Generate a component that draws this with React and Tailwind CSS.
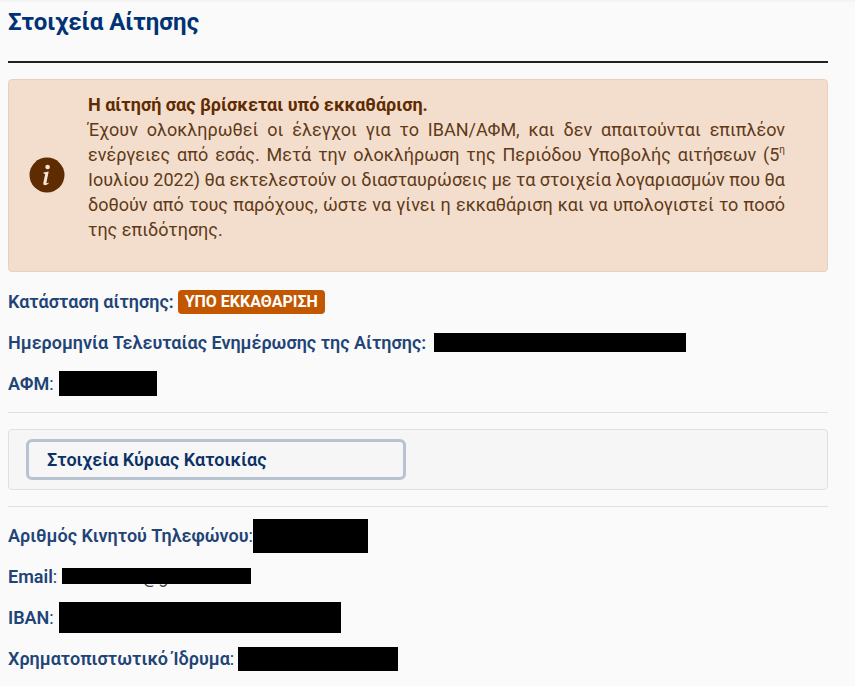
import React from "react";

const Field = ({ label, colon, children }) => (
  <div className="flex h-[25px] items-center whitespace-nowrap">
    <dt>
      <span className="font-semibold">{label}</span>
      {colon}
    </dt>
    <dd className="flex items-center">{children}</dd>
  </div>
);

const InfoIcon = () => (
  <svg viewBox="0 0 36 36" className="h-9 w-9 shrink-0" aria-hidden="true">
    <circle cx="18" cy="18" r="17.5" fill="#5f2b01" />
    <circle cx="18.6" cy="10" r="2.3" fill="#f7e6d8" />
    <path
      d="M14.6 15.6 L19.7 14.6 L17.5 25.2 Q17.3 26.6 18.3 26.2 L19.4 25.4 L19.8 26.2 Q17.8 28.2 15.9 28.2 Q13.9 28.2 14.4 25.6 L16.2 17 L14.4 16.5 Z"
      fill="#f7e6d8"
    />
  </svg>
);

const App = () => {
  return (
    <main className="min-h-screen border-t-2 border-[#f4f4f4] bg-[#fafafa] pl-2 pr-[27px] pt-[5px] pb-3 font-['Roboto',sans-serif] text-lg leading-[25px] text-[#1f4477]">
      <h1 className="border-b-2 border-[#212121] pb-[23px] text-2xl leading-[31px] font-bold text-[#003375]">
        Στοιχεία Αίτησης
      </h1>

      {/* Status message */}
      <section className="mt-4 flex items-center rounded-sm border border-[#e8d0bd] bg-[#f3decd] pt-3 pb-[13px] pl-5 pr-[42px] text-[#5f3a18]">
        <InfoIcon />
        <div className="ml-[23px] mb-4 flex-1">
          <p className="font-bold text-[#5f2b01]">
            Η αίτησή σας βρίσκεται υπό εκκαθάριση.
          </p>
          <p className="text-justify">
            Έχουν ολοκληρωθεί οι έλεγχοι για το ΙΒΑΝ/ΑΦΜ, και δεν απαιτούνται
            επιπλέον ενέργειες από εσάς. Μετά την ολοκλήρωση της Περιόδου
            Υποβολής αιτήσεων (5
            <sup className="-top-2 text-[10px] leading-none">η</sup> Ιουλίου
            2022) θα εκτελεστούν οι διασταυρώσεις με τα στοιχεία λογαριασμών
            που θα δοθούν από τους παρόχους, ώστε να γίνει η εκκαθάριση και να
            υπολογιστεί το ποσό της επιδότησης.
          </p>
        </div>
      </section>

      {/* Application state */}
      <dl className="mt-[17px] space-y-4">
        <Field label="Κατάσταση αίτησης:">
          <span className="ml-1 rounded bg-[#c25700] px-[7px] text-base leading-6 font-bold text-white">
            ΥΠΟ ΕΚΚΑΘΑΡΙΣΗ
          </span>
        </Field>
        <Field label="Ημερομηνία Τελευταίας Ενημέρωσης της Αίτησης:">
          <span className="ml-2 h-[19px] w-[252px] bg-black" />
        </Field>
        <Field label="ΑΦΜ" colon=":">
          <span className="ml-[5px] h-[25px] w-[98px] bg-black" />
        </Field>
      </dl>

      {/* Main residence */}
      <div className="my-4 border-y border-[#dfe0e2] py-4">
        <div className="rounded-sm border border-[#dfe0e2] bg-[#f6f6f6] px-[17px] py-[9px]">
          <button
            type="button"
            className="block h-[41px] w-[380px] max-w-full rounded-md border-3 border-[#b8c3d1] px-[18px] text-left font-semibold text-[#0b3166]"
          >
            Στοιχεία Κύριας Κατοικίας
          </button>
        </div>
      </div>

      {/* Contact and bank details */}
      <dl className="space-y-4">
        <Field label="Αριθμός Κινητού Τηλεφώνου" colon=":">
          <span className="h-[34px] w-[115px] bg-black" />
        </Field>
        <Field label="Email" colon=":">
          <span className="relative ml-[5px] w-[189px] pl-20 text-[#444444]">
            @g
            <span className="absolute inset-x-0 top-1 h-4 bg-black" />
          </span>
        </Field>
        <Field label="IBAN" colon=":">
          <span className="ml-[5px] h-[31px] w-[282px] bg-black" />
        </Field>
        <Field label="Χρηματοπιστωτικό Ίδρυμα" colon=":">
          <span className="ml-1 h-6 w-40 bg-black" />
        </Field>
      </dl>
    </main>
  );
};

export default App;
